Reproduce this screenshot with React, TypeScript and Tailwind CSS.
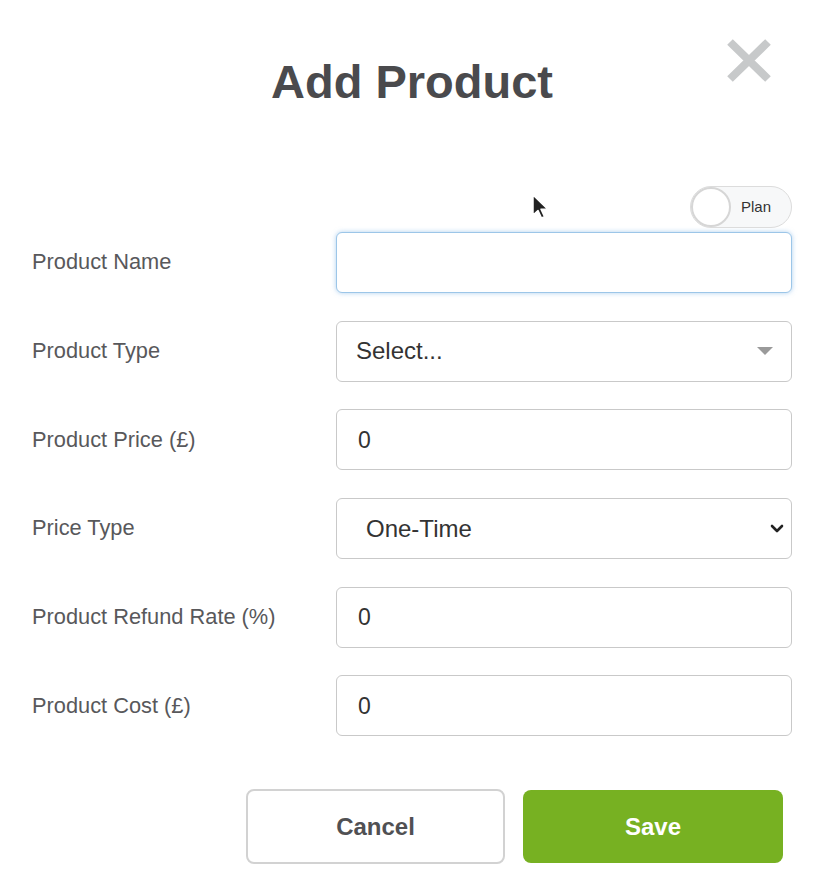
import React from "react";

const font = { fontFamily: '"Liberation Sans", Arial, sans-serif' };

function Row({ label, children }: { label: string; children: React.ReactNode }) {
  return (
    <div className="grid grid-cols-[304px_1fr] items-center h-[61px]">
      <div className="text-[21.8px] text-[#58585b]">{label}</div>
      {children}
    </div>
  );
}

function TextBox({ value, focused }: { value?: string; focused?: boolean }) {
  return (
    <div
      className={
        "h-[61px] rounded-[6px] border flex items-center pl-[21px] text-[23px] text-[#333] bg-white " +
        (focused
          ? "border-[#9cc6e8] shadow-[0_0_5px_rgba(110,170,225,0.55)]"
          : "border-[#c9c9c9]")
      }
    >
      {value}
    </div>
  );
}

export default function App() {
  return (
    <div className="w-[822px] h-[884px] bg-white relative overflow-hidden" style={font}>
      <div className="pl-[32px] pr-[30px]">
        {/* header */}
        <div className="relative pt-[54px] h-[186px]">
          <h1 className="text-center text-[47px] leading-[56px] font-bold text-[#4a4a4d]">
            Add Product
          </h1>
          <svg
            className="absolute right-[20px] top-[38px]"
            width="46"
            height="45"
            viewBox="0 0 46 45"
          >
            <path d="M4 4 L42 41 M42 4 L4 41" stroke="#c7c9ca" strokeWidth="8" strokeLinecap="butt" />
          </svg>
        </div>

        {/* toggle */}
        <div className="flex justify-end h-[42px] mb-[4px]">
          <div className="w-[102px] h-[42px] rounded-full border border-[#dcdcdc] bg-[#f7f8f9] flex items-center relative">
            <div className="w-[40px] h-[40px] rounded-full bg-white border-2 border-[#d6d6d6] shrink-0" />
            <span className="ml-[10px] text-[15px] text-[#333]">Plan</span>
          </div>
        </div>

        {/* form */}
        <div className="flex flex-col gap-[27.7px]">
          <Row label="Product Name">
            <TextBox focused />
          </Row>
          <Row label="Product Type">
            <div className="h-[61px] rounded-[6px] border border-[#c9c9c9] flex items-center justify-between pl-[19px] pr-[18px] text-[24px] text-[#333]">
              <span>Select...</span>
              <svg width="16" height="8" viewBox="0 0 16 8">
                <path d="M0 0 L16 0 L8 8 Z" fill="#9a9a9a" />
              </svg>
            </div>
          </Row>
          <Row label="Product Price (£)">
            <TextBox value="0" />
          </Row>
          <Row label="Price Type">
            <div className="h-[61px] rounded-[6px] border border-[#c9c9c9] flex items-center justify-between pl-[29px] pr-[7px] text-[24px] text-[#333]">
              <span>One-Time</span>
              <svg width="14" height="10" viewBox="0 0 14 10">
                <path d="M2 2 L7 7 L12 2" fill="none" stroke="#222" strokeWidth="2.6" strokeLinecap="round" strokeLinejoin="round" />
              </svg>
            </div>
          </Row>
          <Row label="Product Refund Rate (%)">
            <TextBox value="0" />
          </Row>
          <Row label="Product Cost (£)">
            <TextBox value="0" />
          </Row>
        </div>

        {/* buttons */}
        <div className="flex justify-end gap-[18px] mt-[53px] pr-[9px]">
          <button className="w-[259px] h-[75px] rounded-[8px] border-2 border-[#d2d2d2] bg-white text-[24px] font-bold text-[#505053]">
            Cancel
          </button>
          <button className="w-[260px] h-[73px] mt-[1px] rounded-[8px] bg-[#77b122] text-[24px] font-bold text-white">
            Save
          </button>
        </div>
      </div>

      {/* mouse cursor overlay */}
      <svg className="absolute left-[531px] top-[193px]" width="18" height="28" viewBox="0 0 18 28">
        <path
          d="M2 2 L2 22 L7 17.5 L10.5 25 L13.5 23.6 L10 16.3 L16.5 16 Z"
          fill="#222"
          stroke="#fff"
          strokeWidth="1.5"
          strokeLinejoin="round"
        />
      </svg>
    </div>
  );
}
